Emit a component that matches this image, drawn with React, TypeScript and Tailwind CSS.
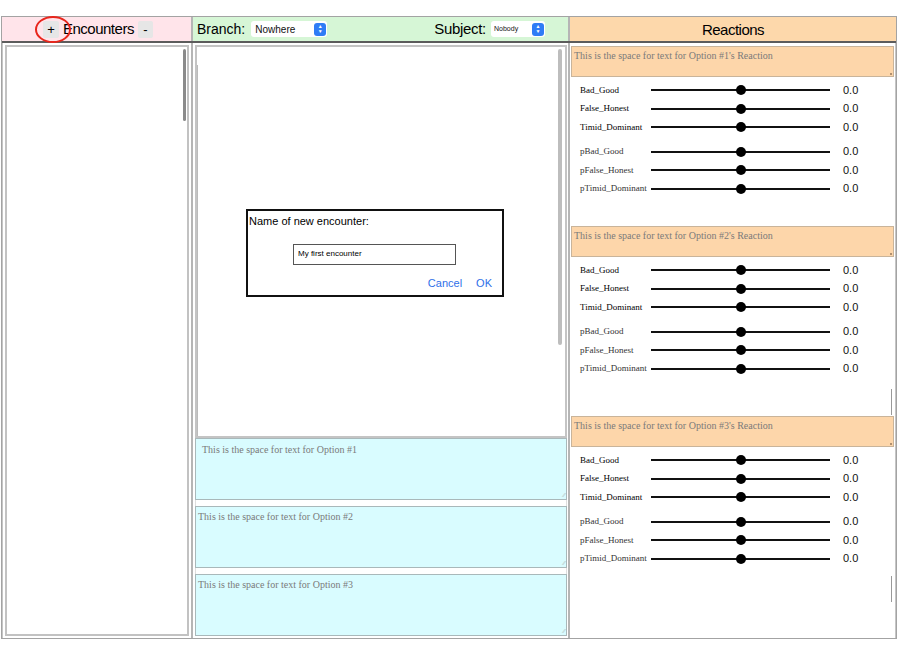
import React from "react"

const sans = { fontFamily: '"Liberation Sans", Arial, sans-serif' }
const serif = { fontFamily: '"Liberation Serif", "Times New Roman", serif' }

const traits = ["Bad_Good", "False_Honest", "Timid_Dominant"]

function Slider({ label, dim }: { label: string; dim?: boolean }) {
  return (
    <div className="flex h-[18.5px] items-center">
      <span
        style={serif}
        className={`w-[80px] shrink-0 pl-[9px] text-[9px] leading-none whitespace-nowrap ${dim ? "text-[#333]" : "text-black"}`}
      >
        {label}
      </span>
      <div className="relative h-[2px] w-[179px] shrink-0 bg-[#111]">
        <span className="absolute top-[-4px] left-[85px] size-[10px] rounded-full bg-black" />
      </div>
      <span style={sans} className="ml-[13px] text-[11px] leading-none text-[#111]">
        0.0
      </span>
    </div>
  )
}

function Reaction({ n, height }: { n: number; height: string }) {
  return (
    <div className={`flex flex-col ${height}`}>
      <div
        style={serif}
        className="relative h-[31px] shrink-0 border border-[#c9b49a] bg-[#fdd6aa] px-[2px] pt-[1px] text-[10px] text-[#7a7a7a]"
      >
        This is the space for text for Option #{n}'s Reaction
        <span className="absolute right-[1px] bottom-[1px] size-[2px] bg-[#b09070]" />
      </div>
      <div className="mt-[4px] flex flex-col">
        {traits.map((t) => (
          <Slider key={t} label={t} />
        ))}
        <div className="h-[6px]" />
        {traits.map((t) => (
          <Slider key={"p" + t} label={"p" + t} dim />
        ))}
      </div>
    </div>
  )
}

function Stepper() {
  return (
    <span className="flex h-[13px] w-[12px] flex-col items-center justify-center rounded-[3px] bg-[#2f7cf6] text-[5px] leading-[5px] text-white">
      <span>▲</span>
      <span>▼</span>
    </span>
  )
}

function OptionBox({ n, indent }: { n: number; indent?: boolean }) {
  return (
    <div
      style={serif}
      className={`relative h-[62px] shrink-0 border border-[#a9b8ba] bg-[#d9fcff] text-[10px] text-[#7a7a7a] ${indent ? "pt-[3px] pl-[6px]" : "pt-[2px] pl-[2px]"}`}
    >
      This is the space for text for Option #{n}
      <span className="absolute right-[1px] bottom-[1px] text-[6px] leading-none text-[#999]">⁄⁄</span>
    </div>
  )
}

export default function App() {
  return (
    <div className="h-[654px] w-[900px] bg-white pt-[16px] pl-[1px]" style={sans}>
      <div className="flex h-[623px] w-[896px] flex-col border border-[#a3a3a3]">
        {/* header */}
        <div className="flex h-[26px] shrink-0 border-b-2 border-b-[#5c5c5c]">
          <div className="relative flex w-[189px] items-center bg-[#ffe4ea] pt-[1px] pl-[41px]">
            <span className="flex h-[17px] w-[16px] items-center justify-center rounded-[2px] bg-[#e6e6e6] text-[13px] leading-none text-black">
              +
            </span>
            <span className="ml-[4px] text-[15px] tracking-[-0.5px] text-black">Encounters</span>
            <span className="ml-[4px] flex h-[17px] w-[15px] items-center justify-center rounded-[2px] bg-[#e6e6e6] text-[13px] leading-none text-black">
              -
            </span>
            <span className="absolute top-[-1px] left-[33px] h-[27px] w-[36px] rounded-[50%] border-2 border-[#e8261c]" />
          </div>
          <div className="w-[2px] bg-[#b5b5b5]" />
          <div className="flex w-[375px] items-center bg-[#d6f6d6] pl-[4px]">
            <span className="text-[14px] text-black">Branch:</span>
            <div className="ml-[6px] flex h-[16px] w-[76px] items-center justify-between rounded-[3px] bg-white pr-[1px] pl-[4px]">
              <span className="text-[10px] text-[#111]">Nowhere</span>
              <Stepper />
            </div>
            <span className="ml-auto text-[15px] tracking-[-0.3px] text-black">Subject:</span>
            <div className="mr-[23px] ml-[5px] flex h-[16px] w-[54px] items-center justify-between rounded-[3px] bg-white pr-[1px] pl-[3px]">
              <span className="text-[7px] text-[#111]">Nobody</span>
              <Stepper />
            </div>
          </div>
          <div className="w-[2px] bg-[#b5b5b5]" />
          <div className="flex flex-1 items-center justify-center bg-[#fdd8ab] pt-[3px]">
            <span className="text-[15px] font-medium tracking-[-0.5px] text-black">Reactions</span>
          </div>
        </div>

        {/* body */}
        <div className="flex min-h-0 flex-1">
          <div className="w-[189px] border-l border-[#c5c5c5] p-[2px]">
            <div className="relative h-full border-2 border-[#c2c2c2] bg-white">
              <span className="absolute top-[2px] right-[1px] h-[72px] w-[3px] rounded bg-[#8a8a8a]" />
            </div>
          </div>
          <div className="w-[2px] bg-[#b5b5b5]" />
          <div className="relative flex w-[375px] flex-col pt-[2px] pr-[1px] pl-[2px]">
            <div className="relative h-[393px] shrink-0 border-2 border-[#c4c4c4] bg-white">
              <span className="absolute top-[18px] bottom-0 left-0 w-px bg-[#bbb]" />
              <span className="absolute top-[2px] right-[3px] h-[296px] w-[4px] rounded bg-[#bdbdbd]" />
            </div>
            <OptionBox n={1} indent />
            <div className="h-[6px] shrink-0 border-x border-[#ddd] bg-white" />
            <OptionBox n={2} />
            <div className="h-[6px] shrink-0 border-x border-[#ddd] bg-white" />
            <div className="flex min-h-0 flex-1 flex-col">
              <OptionBox n={3} />
            </div>

            {/* new encounter prompt */}
            <div className="absolute top-[166px] left-[53px] h-[88px] w-[258px] border-2 border-[#111] bg-white">
              <div className="pt-[2px] pl-[1px] text-[11px] text-black">Name of new encounter:</div>
              <div className="mt-[14px] ml-[45px] flex h-[21px] w-[163px] items-center border border-[#555] pl-[4px] text-[8px] text-black">
                My first encounter
              </div>
              <div className="mt-[10px] flex justify-end gap-[14px] pr-[10px] text-[11px] text-[#2f6fe8]">
                <span>Cancel</span>
                <span>OK</span>
              </div>
            </div>
          </div>
          <div className="w-[2px] bg-[#b5b5b5]" />
          <div className="relative flex flex-1 flex-col border-r border-[#c5c5c5] pt-[3px] pr-[1px] pl-[1px]">
            <Reaction n={1} height="h-[180px]" />
            <Reaction n={2} height="h-[190px]" />
            <Reaction n={3} height="h-[180px]" />
            <span className="absolute top-[346px] right-[3px] h-[26px] w-px bg-[#999]" />
            <span className="absolute top-[533px] right-[3px] h-[26px] w-px bg-[#999]" />
          </div>
        </div>
      </div>
    </div>
  )
}
